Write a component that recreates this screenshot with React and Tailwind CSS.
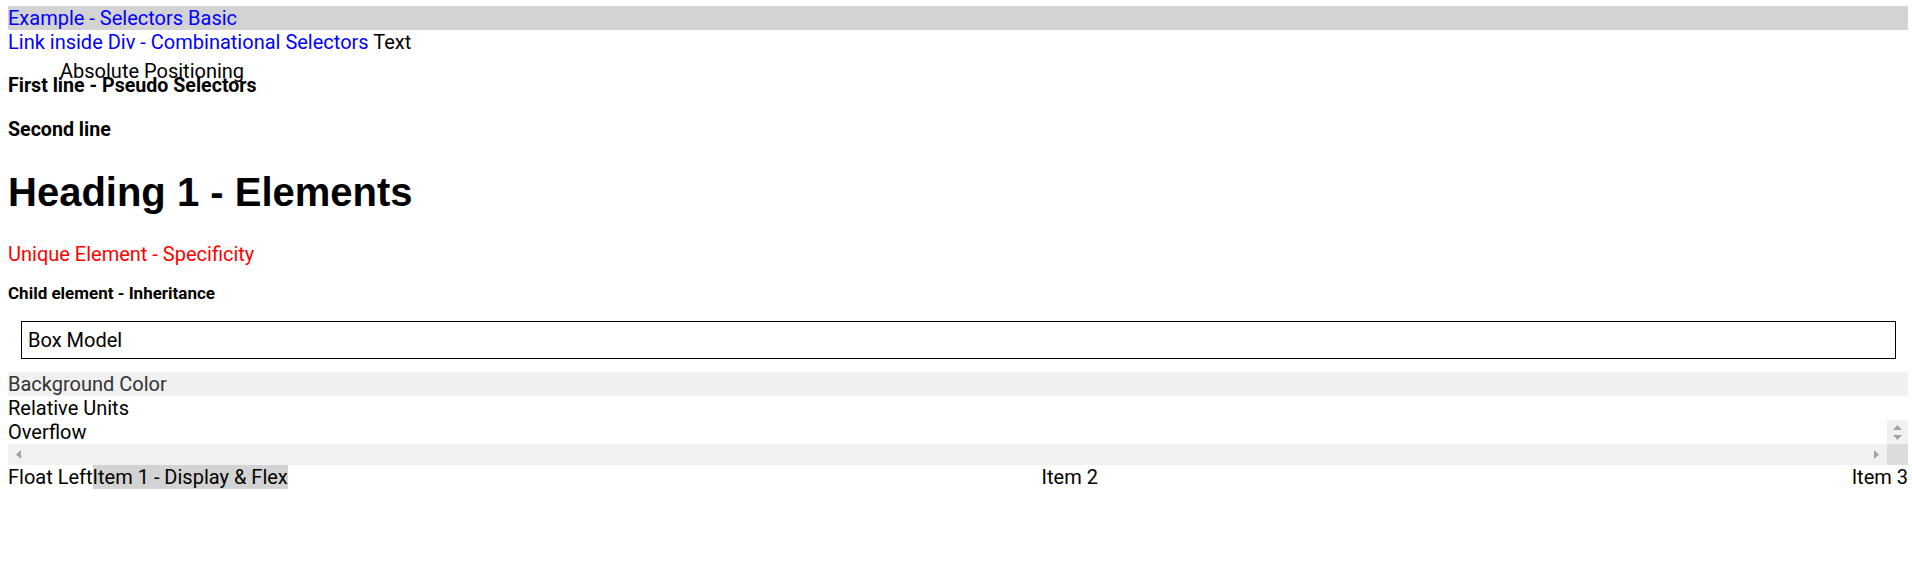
import React from 'react';

function ArrowUp() {
  return (
    <svg width="9" height="5" viewBox="0 0 9 5" className="block">
      <polygon points="4.5,0 9,5 0,5" fill="#a3a3a3" />
    </svg>
  );
}

function ArrowDown() {
  return (
    <svg width="9" height="5" viewBox="0 0 9 5" className="block">
      <polygon points="0,0 9,0 4.5,5" fill="#a3a3a3" />
    </svg>
  );
}

function ArrowLeft() {
  return (
    <svg width="5" height="9" viewBox="0 0 5 9" className="block">
      <polygon points="5,0 5,9 0,4.5" fill="#a3a3a3" />
    </svg>
  );
}

function ArrowRight() {
  return (
    <svg width="5" height="9" viewBox="0 0 5 9" className="block">
      <polygon points="0,0 5,4.5 0,9" fill="#a3a3a3" />
    </svg>
  );
}

export default function App() {
  return (
    <div className="relative min-h-[587px] bg-white pl-[8px] pr-[4px] pt-[6px] font-['Roboto',sans-serif] text-[20px] leading-[24px] text-black">
      {/* selectors basic */}
      <div className="h-[24px] bg-[#d3d3d3] text-[#0000ff]">Example - Selectors Basic</div>
      <div className="h-[24px]">
        <span className="text-[#0000ff]">Link inside Div - Combinational Selectors</span> Text
      </div>

      <div className="absolute left-[60px] top-[59px] leading-[24px]">Absolute Positioning</div>

      {/* pseudo selectors */}
      <p className="mt-[20px] h-[24px] text-[19.6px] font-bold">First line - Pseudo Selectors</p>
      <p className="mt-[20px] h-[24px] text-[19.6px] font-bold">Second line</p>

      <h1 className="mt-[27px] h-[46px] font-['Liberation_Sans',Arial,sans-serif] text-[40px] font-bold leading-[46px]">
        Heading 1 - Elements
      </h1>

      <p className="mt-[27px] h-[24px] text-[#ff0000]">Unique Element - Specificity</p>

      <div className="mt-[17px] h-[21px] text-[17px] font-bold leading-[21px]">Child element - Inheritance</div>

      {/* box model */}
      <div className="mt-[17px] ml-[13px] mr-[12px] border border-black p-[6px]">Box Model</div>

      <div className="mt-[13px] h-[24px] bg-[#f0f0f0] text-[#333333]">Background Color</div>
      <div className="h-[24px]">Relative Units</div>

      {/* overflow with scrollbars */}
      <div>
        <div className="flex h-[24px]">
          <div className="flex-1 overflow-hidden whitespace-nowrap">Overflow</div>
          <div className="flex w-[21px] flex-col items-center justify-center gap-[5px] bg-[#f1f1f1]">
            <ArrowUp />
            <ArrowDown />
          </div>
        </div>
        <div className="flex h-[21px]">
          <div className="flex flex-1 items-center justify-between bg-[#f1f1f1] pl-[8px] pr-[8px]">
            <ArrowLeft />
            <ArrowRight />
          </div>
          <div className="w-[21px] bg-[#dcdcdc]" />
        </div>
      </div>

      {/* float + flex */}
      <div className="flex h-[24px]">
        <span>Float Left</span>
        <div className="flex flex-1 justify-between">
          <span className="bg-[#d3d3d3]">Item 1 - Display &amp; Flex</span>
          <span>Item 2</span>
          <span>Item 3</span>
        </div>
      </div>
    </div>
  );
}
